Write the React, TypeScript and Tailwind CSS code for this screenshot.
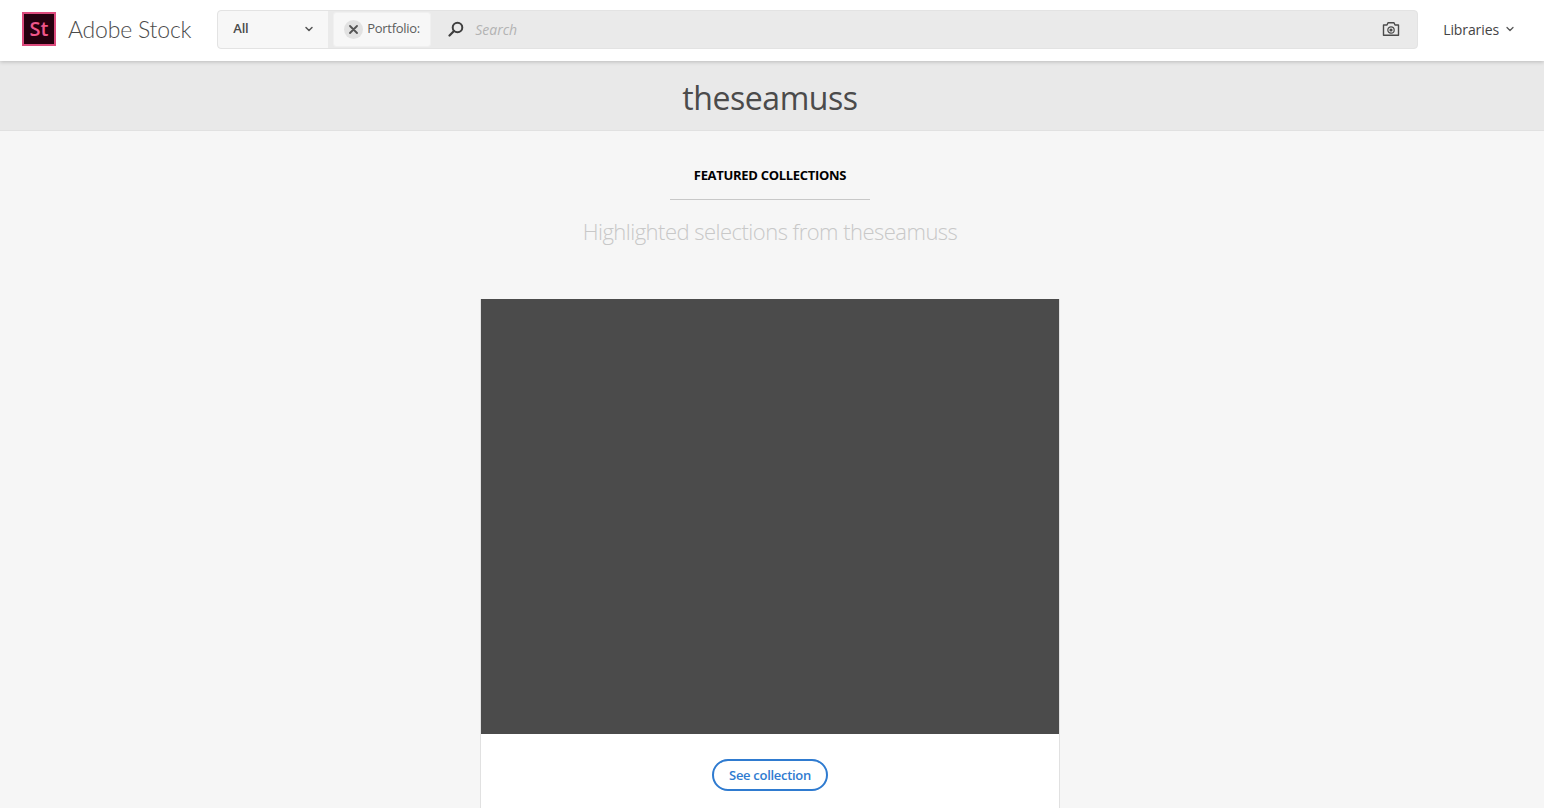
import {ChevronDown} from "lucide-react";

const FONT = "font-['Open_Sans','Noto_Sans',sans-serif]";

function Logo() {
  return (
      <div className="flex items-center shrink-0 mt-[-3px]">
        <div
            className="w-[34px] h-[34px] bg-[#26000f] border-2 border-[#dc4a7c] flex items-center justify-center text-[#f0568a] text-[20px] font-semibold leading-none">
          St
        </div>
        <span className="ml-[12px] text-[23px] font-light text-[#4b4b4b] tracking-[-0.2px] font-['Lato',sans-serif]">
          Adobe Stock
        </span>
      </div>
  );
}

function SearchBar() {
  return (
      <div className="ml-[26px] mt-[-3px] flex-1 h-[39px] flex items-stretch bg-[#eaeaea] rounded-[4px] border border-[#e3e3e3]">
        <div
            className="w-[110px] bg-[#f7f7f7] rounded-l-[4px] flex items-center justify-between pl-[15px] pr-[13px] text-[13px] text-[#4b4b4b] font-semibold tracking-[-0.2px]">
          All
          <ChevronDown size={12} strokeWidth={3} className="text-[#555]"/>
        </div>
        <div
            className="ml-[5px] my-px w-[98px] bg-[#f7f7f7] border border-[#f0f0f0] rounded-[3px] flex items-center pl-[10px] text-[13px] text-[#5c5c5c] tracking-[-0.3px]">
          <span className="w-[19px] h-[19px] rounded-full bg-[#e2e2e2] flex items-center justify-center mr-[4px]">
            <svg width="9" height="9" viewBox="0 0 9 9" className="text-[#555]">
              <path d="M1 1 L8 8 M8 1 L1 8" stroke="currentColor" strokeWidth="1.8" strokeLinecap="round"/>
            </svg>
          </span>
          Portfolio:
        </div>
        <div className="flex-1 flex items-center pl-[17px] pr-[17px]">
          <svg width="16" height="16" viewBox="0 0 16 16" className="text-[#3f3f3f]">
            <circle cx="9.5" cy="6.5" r="4.8" fill="none" stroke="currentColor" strokeWidth="2"/>
            <path d="M6 10 L1.5 14.5" stroke="currentColor" strokeWidth="2.2" strokeLinecap="round"/>
          </svg>
          <span className="ml-[11px] text-[14px] italic text-[#b3b3b3]">Search</span>
          <svg width="18" height="16" viewBox="0 0 18 16" className="ml-auto text-[#4b4b4b]">
            <path d="M1.5 4 H5 L6 1.8 H12 L13 4 H16.5 V14.2 H1.5 Z" fill="none" stroke="currentColor" strokeWidth="1.4"
                  strokeLinejoin="round"/>
            <circle cx="9" cy="9" r="3.2" fill="none" stroke="currentColor" strokeWidth="1.2"/>
            <circle cx="9" cy="9" r="1.6" fill="currentColor"/>
          </svg>
        </div>
      </div>
  );
}

export default function App() {
  return (
      <div className={`h-screen overflow-hidden bg-[#f6f6f6] ${FONT}`}>
        <header className="relative z-10 h-[61px] bg-white flex items-center pl-[22px] pr-[28px] shadow-[0_1px_4px_rgba(0,0,0,0.2)]">
          <Logo/>
          <SearchBar/>
          <div className="ml-[25px] mt-[-3px] flex items-center text-[14px] text-[#444] tracking-[-0.1px]">
            Libraries
            <ChevronDown size={12} strokeWidth={2.5} className="ml-[5px] text-[#555]"/>
          </div>
        </header>

        <div className="h-[70px] bg-[#e9e9e9] border-b border-[#e1e1e1] flex items-center justify-center pr-[4px]">
          <h1 className="mt-[4px] text-[32px] text-[#4b4b4b] leading-none tracking-[-0.45px]">theseamuss</h1>
        </div>

        <main className="flex flex-col items-center pr-[4px]">
          <h2 className="mt-[36px] text-[13px] leading-[16px] font-bold text-black tracking-[-0.3px]">FEATURED COLLECTIONS</h2>
          <div className="mt-[16px] w-[200px] border-t border-[#c8c8c8]"/>
          <p className="mt-[15px] text-[22px] leading-[32px] font-light text-[#c8c8c8] tracking-[-0.52px]">
            Highlighted selections from theseamuss
          </p>

          <div className="mt-[52px] w-[580px] bg-white border border-[#e1e1e1] border-t-0">
            <div className="h-[435px] bg-[#4b4b4b]"/>
            <div className="h-[120px] flex justify-center pt-[25px]">
              <a className="h-[32px] w-[116px] pt-[1px] rounded-full border-2 border-[#2f7bd0] text-[#2f7bd0] text-[13px] font-semibold tracking-[-0.3px] flex items-center justify-center">
                See collection
              </a>
            </div>
          </div>
        </main>
      </div>
  );
}
